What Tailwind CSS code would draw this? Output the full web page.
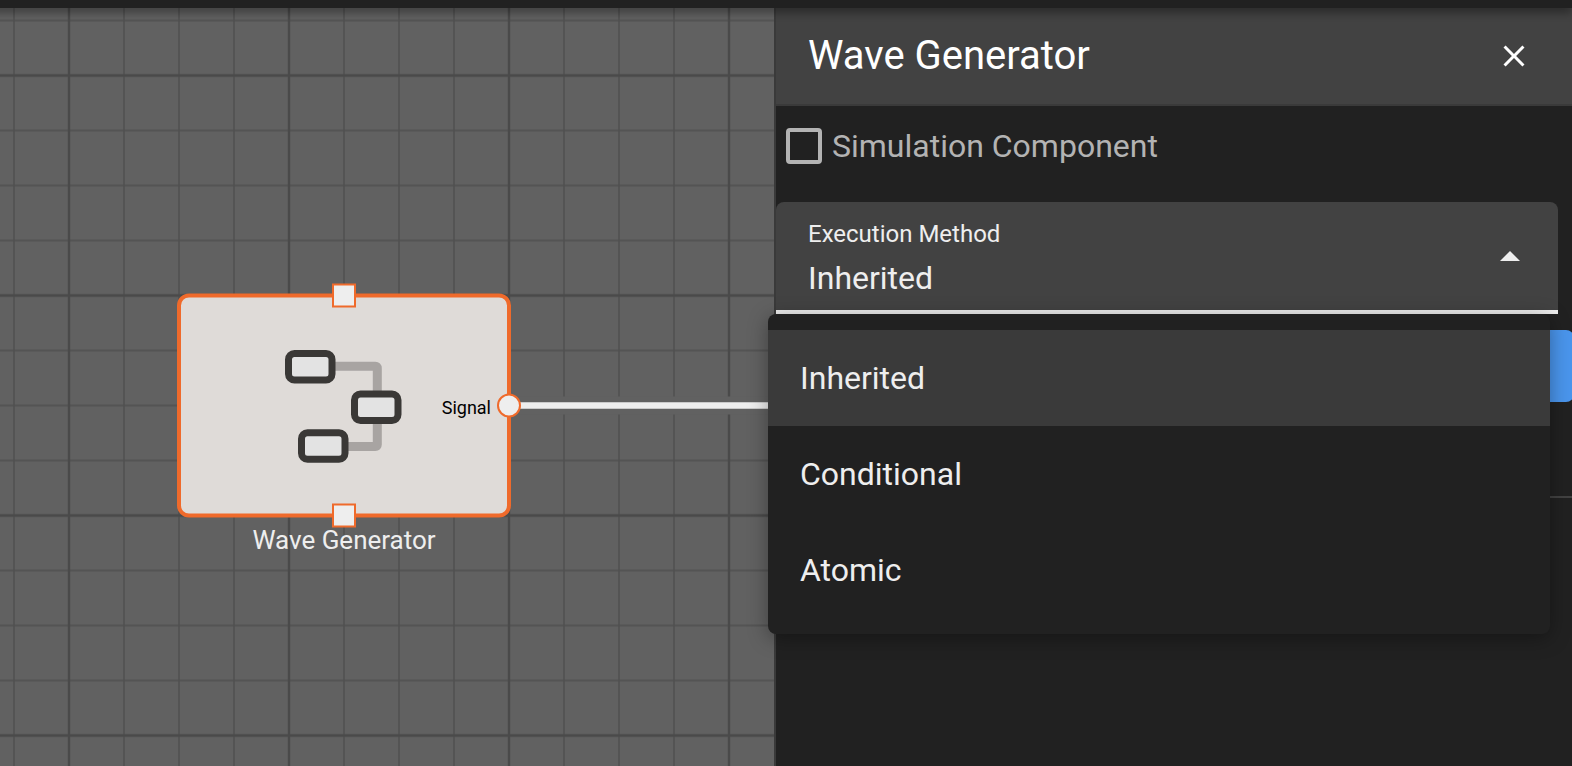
<!DOCTYPE html>
<html lang="en">
<head>
  <meta charset="UTF-8" />
  <meta name="viewport" content="width=device-width, initial-scale=1.0"/>
  <title>Wave Generator</title>
  <script src="https://cdn.jsdelivr.net/npm/@tailwindcss/browser@4"></script>
</head>
<body class="h-screen flex flex-col overflow-hidden bg-[#212121] text-[#eeeeee] font-[Roboto,sans-serif]">
  <!-- Top bar -->
  <header class="relative z-10 h-2 shrink-0 -ml-4 bg-[#212121] shadow-[0_4px_10px_rgba(0,0,0,0.45)]"></header>

  <div class="flex flex-1 min-h-0">
    <!-- Diagram canvas -->
    <main class="flex-1 min-w-0 bg-[#616161]">
      <svg class="block w-full h-full" role="img" aria-label="Diagram">
        <defs>
          <pattern id="minor" x="-41" y="-42.5" width="55" height="55" patternUnits="userSpaceOnUse">
            <path d="M0 0V55M55 0V55" stroke="#545454" stroke-width="2"/>
            <path d="M0 0H55M0 55H55" stroke="#505050" stroke-width="1.4"/>
          </pattern>
          <pattern id="major" x="-151" y="-152.5" width="220" height="220" patternUnits="userSpaceOnUse">
            <path d="M0 0V220M220 0V220M0 0H220M0 220H220" stroke="#4a4a4a" stroke-width="2.5"/>
          </pattern>
        </defs>
        <rect width="100%" height="100%" fill="url(#minor)"/>
        <rect width="100%" height="100%" fill="url(#major)"/>

        <!-- Signal link -->
        <path d="M509 397.5H800" stroke="#616161" stroke-width="18"/>
        <path d="M509 397.5H800" stroke="#eeeeee" stroke-width="6.6"/>

        <!-- Node -->
        <rect x="179" y="287.5" width="330" height="220" rx="10" fill="#dfdbd8" stroke="#ef6a2b" stroke-width="4"/>
        <g fill="none" stroke="#a8a4a2" stroke-width="9" stroke-linejoin="round">
          <path d="M334 358.3H375.3Q377.3 358.3 377.3 360.3V386"/>
          <path d="M377.3 414V436.5Q377.3 438.5 375.3 438.5H346"/>
        </g>
        <g fill="#e3e3e3" stroke="#3a3836" stroke-width="7">
          <rect x="288.5" y="345.5" width="43.5" height="26.5" rx="6"/>
          <rect x="354.5" y="386" width="43.5" height="26.5" rx="6"/>
          <rect x="301.5" y="424.8" width="43.5" height="26.5" rx="6"/>
        </g>
        <g fill="#eeeeee" stroke="#ef6a2b" stroke-width="2">
          <rect x="333" y="276.5" width="22" height="22"/>
          <rect x="333" y="496.5" width="22" height="22"/>
          <circle cx="509" cy="397.5" r="11"/>
        </g>
        <text x="491" y="406" text-anchor="end" fill="#000000" class="text-[18px]">Signal</text>
        <text x="344" y="541" text-anchor="middle" fill="#eeeeee" class="text-[26px]">Wave Generator</text>
      </svg>
    </main>

    <!-- Properties panel -->
    <aside class="w-[798px] shrink-0 border-l-2 border-[#3a3a3a] bg-[#212121]">
      <div class="flex items-center justify-between h-[98px] pl-8 pr-10 bg-[#424242] border-b-2 border-[#3a3a3a]">
        <h1 class="text-[40px] leading-12 text-white">Wave Generator</h1>
        <button type="button" aria-label="Close" class="text-white">
          <svg class="size-9" viewBox="0 0 24 24" fill="currentColor">
            <path d="M19 6.41L17.59 5 12 10.59 6.41 5 5 6.41 10.59 12 5 17.59 6.41 19 12 13.41 17.59 19 19 17.59 13.41 12z"/>
          </svg>
        </button>
      </div>

      <div class="flex items-center gap-2.5 h-20 pl-2.5">
        <input type="checkbox" id="simulation" class="appearance-none size-9 shrink-0 border-4 border-[#b3b3b3] rounded-sm checked:bg-[#b3b3b3]" />
        <label for="simulation" class="text-[32px] leading-10 text-[#b3b3b3]">Simulation Component</label>
      </div>

      <div class="relative mt-4 mr-3.5">
        <div class="flex items-center h-28 pl-8 pr-[38px] bg-[#424242] border-b-4 border-[#eeeeee] rounded-t-lg">
          <div class="flex-1 pt-4">
            <label for="method" class="block text-2xl leading-7">Execution Method</label>
            <select id="method" class="block w-full h-[60px] appearance-none bg-transparent text-[32px] outline-none">
              <option>Inherited</option>
              <option>Conditional</option>
              <option>Atomic</option>
            </select>
          </div>
          <svg class="w-5 h-2.5" viewBox="0 0 20 10" fill="currentColor"><path d="M0 10L10 0l10 10z"/></svg>
        </div>

        <!-- Open menu -->
        <div role="listbox" aria-label="Execution Method" class="absolute z-10 top-full -left-2 w-full py-4 bg-[#212121] rounded-lg shadow-[0_4px_20px_rgba(0,0,0,0.35)]">
          <button type="button" role="option" aria-selected="true" class="block w-full h-24 px-8 text-left text-[32px] bg-[#3a3a3a]">Inherited</button>
          <button type="button" role="option" aria-selected="false" class="block w-full h-24 px-8 text-left text-[32px] hover:bg-[#2c2c2c]">Conditional</button>
          <button type="button" role="option" aria-selected="false" class="block w-full h-24 px-8 text-left text-[32px] hover:bg-[#2c2c2c]">Atomic</button>
        </div>
      </div>

      <div class="flex mt-4 -mr-0.5">
        <button type="button" aria-label="Apply" class="flex-1 h-[72px] bg-[#4a95ec] rounded-lg"></button>
      </div>
      <hr class="mt-[94px] border-t-2 border-[#424242]"/>
    </aside>
  </div>
</body>
</html>
